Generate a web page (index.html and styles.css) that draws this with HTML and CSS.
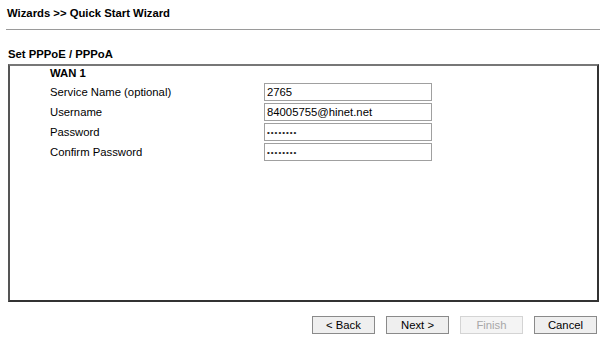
FILE: index.html
```html
<!DOCTYPE html>
<html lang="en">
<head>
  <meta charset="utf-8">
  <title>Quick Start Wizard</title>
  <link rel="stylesheet" href="styles.css">
</head>
<body>
  <h1 class="page-title">Wizards &gt;&gt; Quick Start Wizard</h1>
  <hr class="title-rule">
  <h2 class="section-title">Set PPPoE / PPPoA</h2>
  <div class="wizard-box">
    <div class="wan-form">
      <div class="wan-heading">WAN 1</div>
      <label for="serviceName">Service Name (optional)</label>
      <input type="text" id="serviceName" class="field" value="2765">
      <label for="username">Username</label>
      <input type="text" id="username" class="field" value="84005755@hinet.net">
      <label for="password">Password</label>
      <input type="password" id="password" class="field secret" value="12345678">
      <label for="confirmPassword">Confirm Password</label>
      <input type="password" id="confirmPassword" class="field secret" value="12345678">
    </div>
  </div>
  <div class="button-row">
    <button class="wiz-button">&lt; Back</button>
    <button class="wiz-button">Next &gt;</button>
    <button class="wiz-button" disabled>Finish</button>
    <button class="wiz-button">Cancel</button>
  </div>
</body>
</html>
```

FILE: styles.css
```css
body {
  font-family: "Liberation Sans", Arial, sans-serif;
  font-size: 11.3px;
  margin: 0;
  padding: 0;
  background-color: #ffffff;
  color: #000;
}
.page-title {
  margin: 0;
  padding: 6px 0 0 7px;
  font-size: 11.3px;
  line-height: 14px;
  font-weight: bold;
}
.title-rule {
  margin: 9px 8px 0 6px;
  border: none;
  border-top: 1px solid #9a9a9a;
  height: 0;
}
.section-title {
  margin: 0;
  padding: 17px 0 0 8px;
  font-size: 11.3px;
  line-height: 14px;
  font-weight: bold;
}
.wizard-box {
  margin: 3px 9px 0 8px;
  height: 234px;
  border: 2px solid;
  border-color: #777 #333 #333 #555;
}
.wan-form {
  display: grid;
  grid-template-columns: 214px 168px;
  grid-template-rows: 15px;
  grid-auto-rows: 18px;
  row-gap: 2px;
  padding: 0 0 0 40px;
  line-height: 18px;
}
.wan-heading {
  grid-column: 1 / span 2;
  font-weight: bold;
  line-height: 15px;
}
.wan-form label {
  align-self: center;
}
.field {
  box-sizing: border-box;
  width: 168px;
  height: 18px;
  margin: 0;
  padding: 0 2px;
  border: 1px solid #a0a0a0;
  font-family: "Liberation Sans", Arial, sans-serif;
  font-size: 11.3px;
  color: #000;
  background-color: #fff;
  outline: none;
}
.secret {
  font-size: 8px;
  letter-spacing: 1px;
  color: #222;
}
.button-row {
  display: flex;
  justify-content: flex-end;
  gap: 11px;
  padding: 14px 11px 0 0;
}
.wiz-button {
  width: 63px;
  height: 18px;
  padding: 0;
  font-family: "Liberation Sans", Arial, sans-serif;
  font-size: 11.3px;
  color: #000;
  background-color: #efefef;
  border: 1px solid #8a8a8a;
  border-radius: 0;
}
.wiz-button:disabled {
  color: #a8a8a8;
  background-color: #f4f4f4;
  border-color: #d4d4d4;
}
```
